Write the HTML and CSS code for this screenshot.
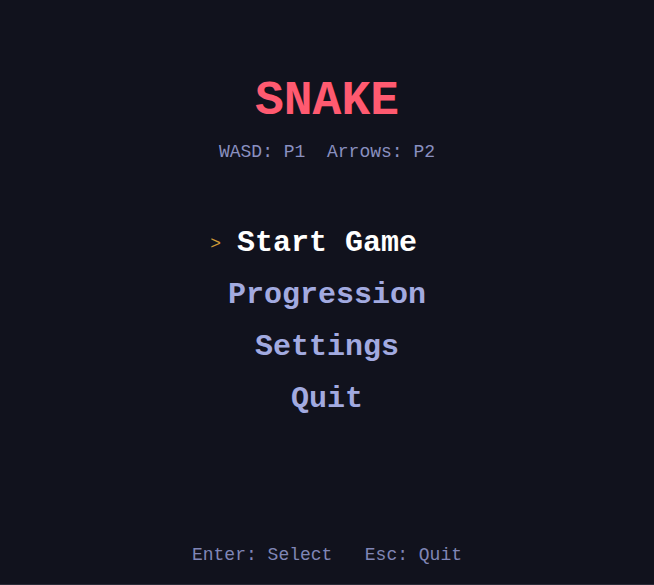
FILE: index.html
```html
<!DOCTYPE html>
<html lang="en">
<head>
  <meta charset="UTF-8">
  <title>Snake</title>
  <link rel="stylesheet" href="styles.css">
</head>
<body>
  <div class="screen">
    <header class="title-block">
      <h1 class="title">SNAKE</h1>
      <p class="controls">WASD: P1  Arrows: P2</p>
    </header>

    <ul class="menu">
      <li class="menu-item selected"><span class="marker">&gt;</span>Start Game</li>
      <li class="menu-item">Progression</li>
      <li class="menu-item">Settings</li>
      <li class="menu-item">Quit</li>
    </ul>

    <footer class="hint">Enter: Select   Esc: Quit</footer>
  </div>
</body>
</html>
```

FILE: styles.css
```css
html, body {
  margin: 0;
  padding: 0;
  height: 100%;
  background-color: #11121d;
}

body {
  font-family: "Courier New", Courier, "Liberation Mono", monospace;
}

.screen {
  height: 100%;
  display: flex;
  flex-direction: column;
  align-items: center;
  box-sizing: border-box;
  border-bottom: 1px solid #2a2b38;
}

.title-block {
  padding-top: 74px;
  text-align: center;
}

.title {
  margin: 0;
  font-size: 48px;
  line-height: 54px;
  font-weight: bold;
  color: #ff5a70;
}

.controls {
  margin: 12px 0 0;
  font-size: 18px;
  line-height: 24px;
  white-space: pre;
  color: #8a90c0;
}

.menu {
  list-style: none;
  margin: 61px 0 0;
  padding: 0;
  display: flex;
  flex-direction: column;
  align-items: center;
  gap: 16px;
}

.menu-item {
  position: relative;
  font-size: 30px;
  line-height: 36px;
  font-weight: bold;
  color: #a2aae0;
}

.menu-item.selected {
  color: #ffffff;
}

.marker {
  position: absolute;
  right: calc(100% + 16px);
  top: 1px;
  font-size: 18px;
  font-weight: normal;
  color: #cf9a36;
}

.hint {
  margin-top: auto;
  padding-bottom: 17px;
  font-size: 18px;
  line-height: 24px;
  white-space: pre;
  color: #8086b6;
}
```
